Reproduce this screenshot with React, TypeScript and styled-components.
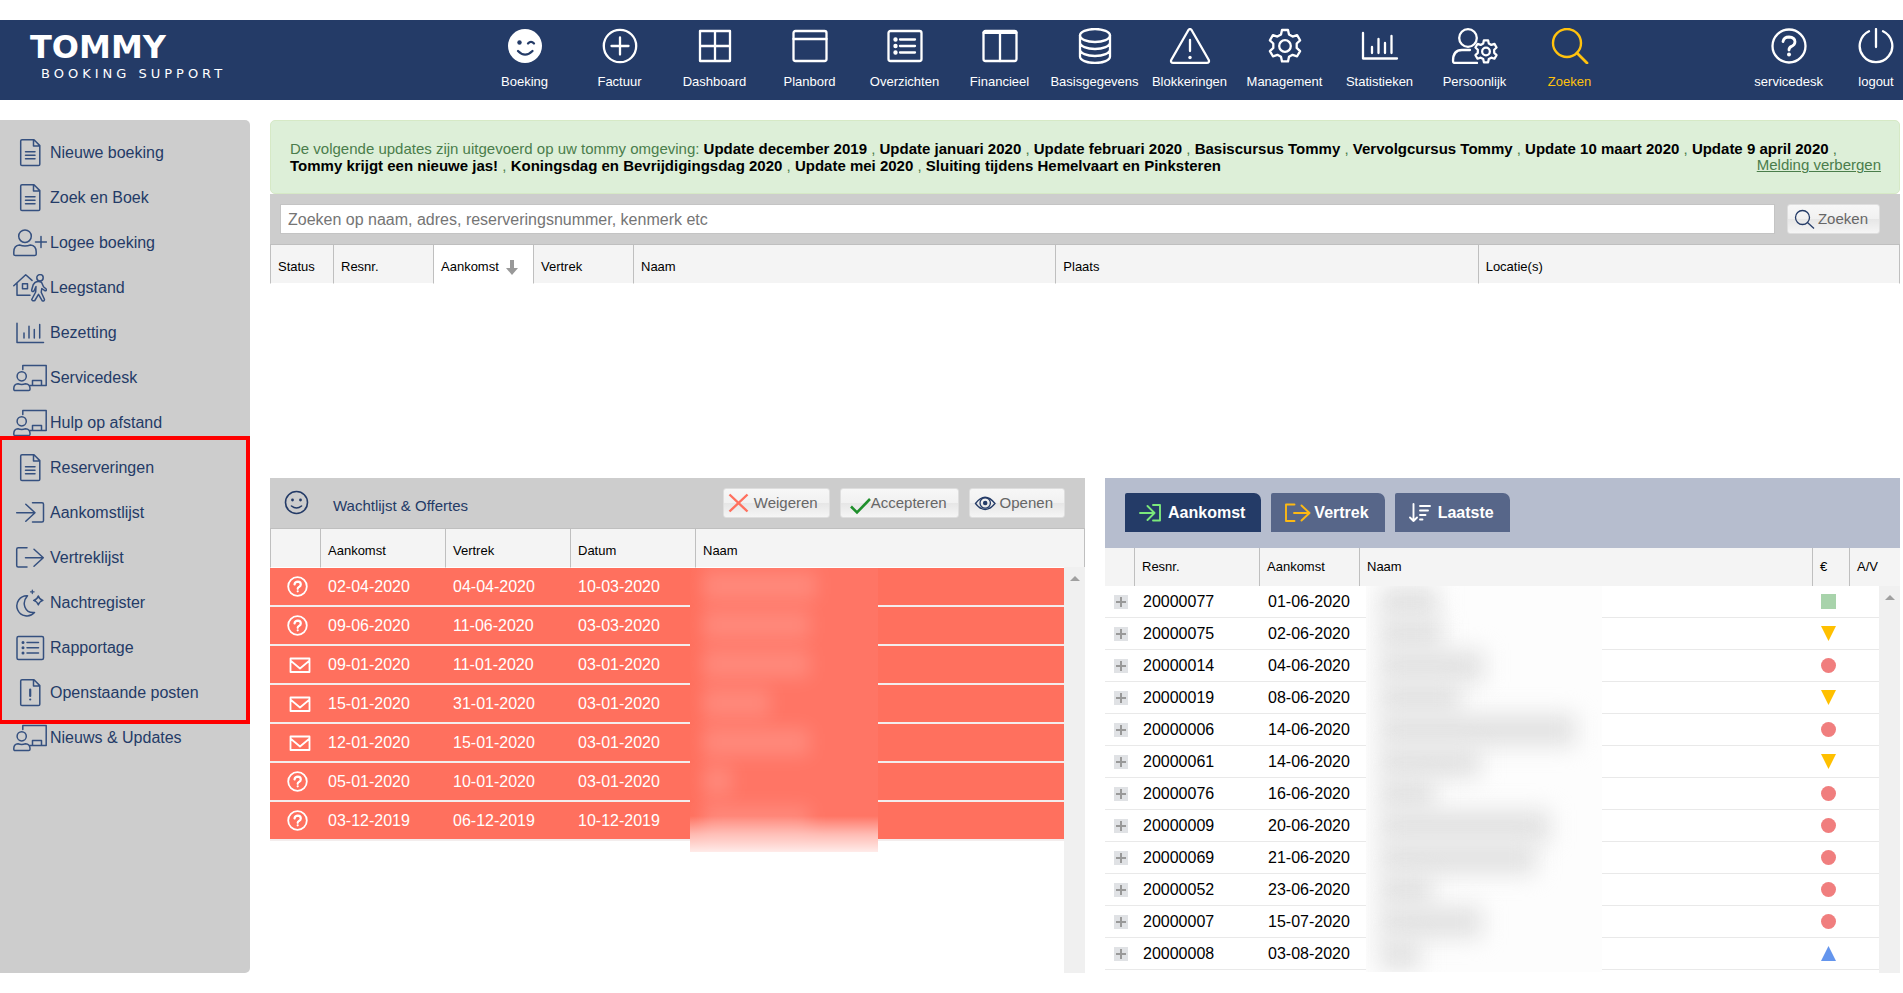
import React from "react";
import styled, { createGlobalStyle, css } from "styled-components";

const GlobalStyle = createGlobalStyle`
  *, *::before, *::after { box-sizing: border-box; }
  body {
    margin: 0;
    background: #fff;
    font-family: "Liberation Sans", Arial, sans-serif;
    color: #000;
  }
  a { color: inherit; text-decoration: none; }
  button, input { font-family: inherit; }
`;

const navy = "#243b67";
const grey = "#cdcdcd";
const line = "#bfbfbf";
const coral = "#ff705e";

/* ---------- Top bar ---------- */

const Page = styled.div`
  padding: 20px 0;
`;

const TopBar = styled.header`
  display: flex;
  height: 80px;
  background: ${navy};
  color: #fff;
`;

const Brand = styled.a`
  display: block;
  flex: 0 0 477px;
  padding: 8px 0 0 30px;
`;

const BrandName = styled.div`
  font: bold 32px/38px "DejaVu Sans", sans-serif;
`;

const BrandTag = styled.div`
  padding-left: 11px;
  font: 13px/16px "DejaVu Sans", sans-serif;
  letter-spacing: 4px;
`;

const MainNav = styled.nav`
  display: flex;
  flex: 1;
`;

const UserNav = styled.nav`
  display: flex;
  gap: 29px;
  padding-right: 3px;
`;

const NavLink = styled.a<{ $active?: boolean; $fixed?: boolean }>`
  display: flex;
  flex-direction: column;
  align-items: center;
  gap: 10px;
  padding-top: 8px;
  width: ${(p) => (p.$fixed ? "95px" : "auto")};
  font-size: 13px;
  line-height: 16px;
  white-space: nowrap;
  color: ${(p) => (p.$active ? "#ffc20e" : "#fff")};
`;

const NavSvg = styled.svg`
  display: block;
  width: 48px;
  height: 36px;
  fill: none;
  stroke: currentColor;
  stroke-width: 2.3;
  stroke-linecap: round;
  stroke-linejoin: round;
`;

/* ---------- Side menu ---------- */

const Content = styled.div`
  display: grid;
  grid-template-columns: 250px minmax(0, 1fr);
  gap: 20px;
  padding: 20px 3px 0 0;
`;

const Sidebar = styled.nav`
  padding: 10px 0;
  background: ${grey};
  border-radius: 0 5px 5px 0;
`;

const MenuGroup = styled.div`
  position: relative;
`;

const Highlight = styled.div`
  position: absolute;
  inset: -9px 0 -9px -2px;
  border: 4px solid #f00;
  pointer-events: none;
`;

const MenuLink = styled.a`
  display: flex;
  align-items: center;
  gap: 3px;
  height: 45px;
  padding-left: 13px;
  font-size: 16px;
  color: ${navy};
`;

const MenuSvg = styled.svg`
  display: block;
  width: 34px;
  height: 28px;
  fill: none;
  stroke: #35507f;
  stroke-width: 1.5;
  stroke-linecap: round;
  stroke-linejoin: round;
`;

/* ---------- Notice and search ---------- */

const Notice = styled.section`
  position: relative;
  min-height: 74px;
  padding: 19px;
  border: 1px solid #d6e9c6;
  border-radius: 5px;
  background: #ddefd8;
  color: #4a7d4b;
  font-size: 15px;
  line-height: 17px;
`;

const Update = styled.a`
  font-weight: bold;
  color: #000;
`;

const HideLink = styled.a`
  position: absolute;
  right: 18px;
  top: 35px;
  text-decoration: underline;
`;

const SearchForm = styled.form`
  display: flex;
  gap: 12px;
  height: 50px;
  padding: 10px 20px 10px 10px;
  background: ${grey};
`;

const SearchInput = styled.input`
  flex: 1;
  min-width: 0;
  height: 30px;
  padding: 2px 7px 0;
  border: 1px solid #c4c4c4;
  background: #fff;
  font-size: 16px;
  &::placeholder { color: #757575; opacity: 1; }
`;

const ToolButton = styled.button`
  display: flex;
  align-items: center;
  height: 30px;
  padding: 0 11px 1px 4px;
  border: 1px solid #dedede;
  border-radius: 3px;
  background: linear-gradient(#f7f7f7, #f1f1f1 50%, #e6e6e6 50%, #f5f5f5);
  font-size: 15px;
  color: #666;
`;

const ToolSvg = styled.svg`
  display: block;
  width: 26px;
  height: 24px;
  fill: none;
  stroke: ${navy};
  stroke-width: 1.3;
`;

/* ---------- Tables ---------- */

const Table = styled.table`
  width: 100%;
  table-layout: fixed;
  border-spacing: 0;
  border-collapse: separate;
`;

const Col = styled.col<{ $w?: number }>`
  width: ${(p) => (p.$w ? `${p.$w}px` : "auto")};
`;

const Th = styled.th<{ $sorted?: boolean; $low?: boolean; $open?: boolean }>`
  height: 38px;
  padding: ${(p) => (p.$low ? "6px 0 0 7px" : "0 0 0 7px")};
  border-left: 1px solid ${(p) => (p.$open ? "transparent" : line)};
  background: ${(p) => (p.$sorted ? "#fff" : "#f4f4f4")};
  font-size: 13px;
  font-weight: normal;
  line-height: 16px;
  text-align: left;
  white-space: nowrap;
  ${(p) =>
    p.$low &&
    css`
      height: 40px;
      border-top: 1px solid ${line};
      border-bottom: 1px solid #fff;
      &:last-child { border-right: 1px solid ${line}; }
    `}
`;

const SortSvg = styled.svg`
  width: 12px;
  height: 15px;
  margin-left: 7px;
  vertical-align: -4px;
  fill: #999;
`;

const Results = styled.section`
  min-height: 234px;
`;

const Panels = styled.div`
  display: grid;
  grid-template-columns: 815fr 795fr;
  gap: 20px;
`;

const Panel = styled.section`
  min-width: 0;
  display: flex;
  flex-direction: column;
`;

const PanelBody = styled.div`
  position: relative;
  flex: 1;
`;

const WaitHead = styled.div`
  display: flex;
  align-items: center;
  gap: 10px;
  height: 50px;
  padding: 0 20px 0 14px;
  background: ${grey};
`;

const SmileSvg = styled.svg`
  width: 25px;
  height: 25px;
  margin: 0 14px 2px 0;
  fill: none;
  stroke: ${navy};
  stroke-width: 1.6;
  stroke-linecap: round;
`;

const PanelTitle = styled.h2`
  flex: 1;
  margin: 0;
  padding-top: 4px;
  font-size: 15px;
  font-weight: normal;
  color: ${navy};
`;

const WaitCell = styled.td`
  height: 39px;
  padding: 0 0 0 8px;
  border-bottom: 2px solid #f3eded;
  background: ${coral};
  background-clip: padding-box;
  font-size: 16px;
  line-height: 18px;
  color: #fff;
`;

const RowSvg = styled.svg`
  display: block;
  width: 26px;
  height: 22px;
  margin-left: 9px;
  fill: none;
  stroke: #fff;
  stroke-width: 1.8;
  stroke-linecap: round;
  stroke-linejoin: round;
`;

const ScrollTrack = styled.div<{ $top: number }>`
  position: absolute;
  top: ${(p) => p.$top}px;
  right: 0;
  bottom: 0;
  width: 21px;
  background: #f0f0f0;
  &::before {
    content: "";
    display: block;
    width: 0;
    margin: 9px auto 0;
    border: 5px solid transparent;
    border-top: 0;
    border-bottom-color: #a0a0a0;
  }
`;

const TabHead = styled.div`
  display: flex;
  gap: 10px;
  height: 70px;
  padding: 15px 20px 16px;
  background: #b6bdce;
`;

const Tab = styled.button<{ $active?: boolean }>`
  display: flex;
  align-items: center;
  height: 39px;
  padding: 0 16px 0 14px;
  border: 0;
  border-radius: 2px 7px 0 0;
  background: ${(p) => (p.$active ? navy : "#576689")};
  font-size: 16px;
  font-weight: bold;
  color: #fff;
`;

const TabSvg = styled.svg<{ $color: string }>`
  display: block;
  width: 29px;
  height: 24px;
  fill: none;
  stroke: ${(p) => p.$color};
  stroke-width: 1.9;
  stroke-linecap: round;
  stroke-linejoin: round;
`;

const ArrivalCell = styled.td`
  height: 32px;
  padding: 0 0 0 9px;
  border-bottom: 1px solid #e9e9e9;
  font-size: 16px;
  line-height: 18px;
`;

const ExpandButton = styled.button`
  display: block;
  width: 14px;
  height: 14px;
  padding: 0;
  border: 0;
  background:
    linear-gradient(#999, #999) center / 10px 2px no-repeat,
    linear-gradient(#999, #999) center / 2px 10px no-repeat,
    #e0e2e5;
`;

const StatusSvg = styled.svg`
  display: block;
  width: 15px;
  height: 15px;
`;

const ArrivalBody = styled(PanelBody)`
  min-height: 425px;
`;

/* Redacted guest names */
const WaitMask = styled.div`
  position: absolute;
  left: 420px;
  top: 40px;
  width: 188px;
  height: 284px;
  padding-top: 4px;
  overflow: hidden;
  background: linear-gradient(90deg, ${coral}, #ff7565 20px);
  &::after {
    content: "";
    position: absolute;
    inset: auto 0 0 0;
    height: 36px;
    background: linear-gradient(rgba(255, 255, 255, 0), rgba(255, 255, 255, 0.5) 50%, rgba(255, 255, 255, 0.86));
  }
`;

const ArrivalMask = styled.div`
  position: absolute;
  left: 261px;
  top: 38px;
  width: 236px;
  bottom: 1px;
  overflow: hidden;
  background: #fdfdfd;
`;

const Smear = styled.div<{ $h: number; $tone: string; $soft: number; $gap: number }>`
  height: ${(p) => p.$h}px;
  margin: 0 0 ${(p) => p.$gap}px 14px;
  background: ${(p) => p.$tone};
  filter: blur(${(p) => p.$soft}px);
`;

/* ---------- Icon drawings ---------- */

const COG =
  "M-3 -16h6l1 4.6 3.6 2 4.5-1.5 3 5.2-3.4 3.2v4.4l3.4 3.2-3 5.2-4.5-1.5-3.6 2-1 4.6h-6l-1-4.6-3.6-2-4.5 1.5-3-5.2 3.4-3.2v-4.4l-3.4-3.2 3-5.2 4.5 1.5 3.6-2z";

const navIcons: Record<string, React.ReactNode> = {
  wink: (
    <>
      <circle cx="24" cy="18" r="17" fill="#fff" stroke="none" />
      <circle cx="18.5" cy="14.5" r="2.2" fill={navy} stroke="none" />
      <path d="M27 15.5q3-3.4 6 0M17 23q7 7.4 14.5 0" stroke={navy} />
    </>
  ),
  plus: (
    <>
      <circle cx="24" cy="18" r="16.2" />
      <path d="M24 9.5v17M15.5 18h17" />
    </>
  ),
  dashboard: <path d="M9 3h30v30H9zM24 3v30M9 18h30" />,
  board: (
    <>
      <rect x="7.5" y="3" width="33" height="30" rx="2" />
      <path d="M7.5 11h33" />
    </>
  ),
  list: (
    <>
      <rect x="7.5" y="3" width="33" height="30" rx="2" />
      <path d="M19 11.5h15M19 18h15M19 24.5h15" />
      <path d="M14.5 11.5h.01M14.5 18h.01M14.5 24.5h.01" strokeWidth="4.4" />
    </>
  ),
  columns: (
    <>
      <rect x="7.5" y="3" width="33" height="30" rx="2" />
      <path d="M24 5v28" />
      <path d="M8 4.5h32" strokeWidth="3" />
    </>
  ),
  database: (
    <>
      <ellipse cx="24" cy="7.5" rx="15" ry="6.5" />
      <path d="M9 7.5v21c0 3.6 6.7 6.5 15 6.5s15-2.9 15-6.5v-21M9 14.5c0 3.6 6.7 6.5 15 6.5s15-2.9 15-6.5M9 21.5c0 3.6 6.7 6.5 15 6.5s15-2.9 15-6.5" />
    </>
  ),
  warning: (
    <>
      <path d="M22.6 1.8q1.4-1.6 2.8 0L42.8 32q.8 2.8-2 2.8H7.2q-2.8 0-2-2.8z" />
      <path d="M24 12v11" />
      <path d="M24 29.5h.01" strokeWidth="3.4" />
    </>
  ),
  cog: (
    <g transform="translate(24 18)">
      <path d={COG} />
      <circle r="5.8" />
    </g>
  ),
  chart: <path d="M7 5v25.5h34M16 19v6M22.5 11v14M29 15v10M35.5 8v17" />,
  usercog: (
    <>
      <circle cx="17" cy="10" r="8.8" />
      <path d="M19 22H11c-6 0-9 4-9 11q0 2 2 2h22" />
      <g transform="translate(35 23.5) scale(.7)" strokeWidth="3.2">
        <path d={COG} />
        <circle r="5.5" />
      </g>
    </>
  ),
  search: (
    <>
      <circle cx="21" cy="15" r="14" strokeWidth="2.4" />
      <path d="M31 25l10 10" strokeWidth="2.8" />
    </>
  ),
  help: (
    <>
      <circle cx="24" cy="18" r="16.5" />
      <path d="M18 13.5q.8-4.5 6-4.5 5.8.2 6 4.8 0 3-3.5 4.6-2.5 1-2.5 3.6" strokeWidth="2.8" />
      <path d="M24 26.5h.01" strokeWidth="4" />
    </>
  ),
  power: <path d="M24 1v18M17 3.2a16.3 16.3 0 1 0 14 0" />,
};

const NavIcon = ({ name }: { name: string }) => (
  <NavSvg viewBox="0 0 48 36" aria-hidden="true">
    {navIcons[name]}
  </NavSvg>
);

const sheet = <path d="M9 .8h12l5.8 5.8v18.6q0 1.3-1.3 1.3H9q-1.3 0-1.3-1.3V2.1Q7.7.8 9 .8zM20.5 1v6h6" />;
const enterPath = "M3.7 13.7H22M12.8 5.3l9.2 8.4-9.2 8.6M19.5 3.7h9.5q1.5 0 1.5 1.5v16.4q0 1.5-1.5 1.5h-9.5";
const exitPath = "M14 3.7H5.2q-1.5 0-1.5 1.5v16.4q0 1.5 1.5 1.5H14M12.5 13.7h17.8M21 5.3l9.3 8.4-9.3 8.6";

const menuIcons: Record<string, React.ReactNode> = {
  sheet: (
    <>
      {sheet}
      <path d="M12.5 12.8h9.5M12.5 16.3h9.5M12.5 19.8h9.5" />
    </>
  ),
  guest: (
    <>
      <circle cx="12" cy="7.2" r="6.3" />
      <path d="M6.5 16q5.5 2 11 0 5.7.5 5.7 7v2q0 1.6-1.6 1.6H2.4Q.8 26.600.8 25v-2q0-6.5 5.7-7zM22.5 13h11M28 7.5v11" />
    </>
  ),
  vacant: (
    <>
      <path d="M.8 11.8L12.7.8l6.3 5.6M4 9.5v11.8h13M9.5 9.8h5v5h-5z" />
      <circle cx="27" cy="3.8" r="3.2" />
      <path d="M22 8.5q3-1.8 6.5-.2l2 4.4 2.7 2.3q.6 2-1.4 1.7l-3-2.2-.6 3.8 3.3 7.2q-.2 2-2.2 1.4l-3.8-6.6-3.7 6.2q-2.4 1-3.1-1l4-7.5.3-5.5-2 4.5q-2.2 1.3-2.4-.8l1.6-5.4z" />
    </>
  ),
  chart: <path d="M4 4.3v19.2h26.5M11 14v5M16 7.3v11.7M21.3 10.5V19M26.7 5.5V19" />,
  desk: (
    <>
      <path d="M9.8 5.5V1.5h23.4v20H17M19.5 21.5v-5h9v5" />
      <circle cx="8.7" cy="12.3" r="4.6" />
      <path d="M5 19.8q3.7 1.3 7.5 0 4.3.2 4.5 4.5v1q0 1.3-1.3 1.3H2.1Q.8 26.600.8 25.3v-1Q1 20 5 19.8z" />
    </>
  ),
  enter: <path d={enterPath} />,
  exit: <path d={exitPath} />,
  night: (
    <>
      <path d="M14.5 6.7A10.1 10.1 0 1 0 21.5 23.5C12 24.5 8 14 14.5 6.7zM25.3 7q1 3.3 4.6 4.4-3.6 1.2-4.6 4.5-1-3.3-4.6-4.5 3.6-1.1 4.6-4.4z" />
      <path d="M19.3 1v3.6M17.5 2.8h3.6" strokeWidth="1.2" />
    </>
  ),
  list: (
    <>
      <rect x="4" y="2.5" width="26.5" height="23" rx="1.5" />
      <path d="M14 8.5h11.5M14 13.8h11.5M14 19h11.5" />
      <path d="M10 8.5h.01M10 13.8h.01M10 19h.01" strokeWidth="3" />
    </>
  ),
  due: (
    <>
      {sheet}
      <path d="M17.2 10.5v6.5M17.2 20.5h.01" strokeWidth="2.2" />
    </>
  ),
};

const mainNav = [
  ["wink", "Boeking"],
  ["plus", "Factuur"],
  ["dashboard", "Dashboard"],
  ["board", "Planbord"],
  ["list", "Overzichten"],
  ["columns", "Financieel"],
  ["database", "Basisgegevens"],
  ["warning", "Blokkeringen"],
  ["cog", "Management"],
  ["chart", "Statistieken"],
  ["usercog", "Persoonlijk"],
  ["search", "Zoeken"],
];

const menuTop = [
  ["sheet", "Nieuwe boeking"],
  ["sheet", "Zoek en Boek"],
  ["guest", "Logee boeking"],
  ["vacant", "Leegstand"],
  ["chart", "Bezetting"],
  ["desk", "Servicedesk"],
  ["desk", "Hulp op afstand"],
];

const menuLists = [
  ["sheet", "Reserveringen"],
  ["enter", "Aankomstlijst"],
  ["exit", "Vertreklijst"],
  ["night", "Nachtregister"],
  ["list", "Rapportage"],
  ["due", "Openstaande posten"],
];

const updates = [
  "Update december 2019",
  "Update januari 2020",
  "Update februari 2020",
  "Basiscursus Tommy",
  "Vervolgcursus Tommy",
  "Update 10 maart 2020",
  "Update 9 april 2020",
  "Tommy krijgt een nieuwe jas!",
  "Koningsdag en Bevrijdigingsdag 2020",
  "Update mei 2020",
  "Sluiting tijdens Hemelvaart en Pinksteren",
];

const waiting = [
  ["vraag", "02-04-2020", "04-04-2020", "10-03-2020"],
  ["vraag", "09-06-2020", "11-06-2020", "03-03-2020"],
  ["mail", "09-01-2020", "11-01-2020", "03-01-2020"],
  ["mail", "15-01-2020", "31-01-2020", "03-01-2020"],
  ["mail", "12-01-2020", "15-01-2020", "03-01-2020"],
  ["vraag", "05-01-2020", "10-01-2020", "03-01-2020"],
  ["vraag", "03-12-2019", "06-12-2019", "10-12-2019"],
];

const arrivals = [
  ["20000077", "01-06-2020", "square"],
  ["20000075", "02-06-2020", "down"],
  ["20000014", "04-06-2020", "circle"],
  ["20000019", "08-06-2020", "down"],
  ["20000006", "14-06-2020", "circle"],
  ["20000061", "14-06-2020", "down"],
  ["20000076", "16-06-2020", "circle"],
  ["20000009", "20-06-2020", "circle"],
  ["20000069", "21-06-2020", "circle"],
  ["20000052", "23-06-2020", "circle"],
  ["20000007", "15-07-2020", "circle"],
  ["20000008", "03-08-2020", "up"],
];

const waitSmears = [112, 106, 106, 66, 106, 28, 106];
const arrivalSmears = [58, 62, 104, 80, 196, 100, 54, 170, 156, 52, 102, 40];

const Menu = ({ items }: { items: string[][] }) => (
  <>
    {items.map(([icon, label]) => (
      <MenuLink href="#" key={label}>
        <MenuSvg viewBox="0 0 34 28" aria-hidden="true">
          {menuIcons[icon]}
        </MenuSvg>
        {label}
      </MenuLink>
    ))}
  </>
);

const Status = ({ kind }: { kind: string }) => (
  <StatusSvg viewBox="0 0 15 15" role="img" aria-label={kind}>
    {kind === "square" && <rect width="15" height="15" fill="#a8d3ab" />}
    {kind === "circle" && <circle cx="7.5" cy="7.5" r="7.5" fill="#f07e7e" />}
    {kind === "down" && <path d="M0 0h15L7.5 15z" fill="#ffc000" />}
    {kind === "up" && <path d="M0 15h15L7.5 0z" fill="#6495ed" />}
  </StatusSvg>
);

export default function App() {
  return (
    <Page>
      <GlobalStyle />
      <TopBar>
        <Brand href="#">
          <BrandName>TOMMY</BrandName>
          <BrandTag>BOOKING SUPPORT</BrandTag>
        </Brand>
        <MainNav>
          {mainNav.map(([icon, label]) => (
            <NavLink href="#" key={label} $fixed $active={icon === "search"}>
              <NavIcon name={icon} />
              {label}
            </NavLink>
          ))}
        </MainNav>
        <UserNav>
          <NavLink href="#">
            <NavIcon name="help" />
            servicedesk
          </NavLink>
          <NavLink href="#">
            <NavIcon name="power" />
            logout
          </NavLink>
        </UserNav>
      </TopBar>

      <Content>
        <Sidebar>
          <Menu items={menuTop} />
          <MenuGroup>
            <Menu items={menuLists} />
            <Highlight />
          </MenuGroup>
          <Menu items={[["desk", "Nieuws & Updates"]]} />
        </Sidebar>

        <main>
          <Notice>
            De volgende updates zijn uitgevoerd op uw tommy omgeving:{" "}
            {updates.map((u, i) => (
              <React.Fragment key={u}>
                {i > 0 && " , "}
                <Update href="#">{u}</Update>
              </React.Fragment>
            ))}
            <HideLink href="#">Melding verbergen</HideLink>
          </Notice>

          <SearchForm>
            <SearchInput
              type="text"
              aria-label="Zoeken"
              placeholder="Zoeken op naam, adres, reserveringsnummer, kenmerk etc"
            />
            <ToolButton type="button">
              <ToolSvg viewBox="0 0 26 24">
                <circle cx="10.5" cy="10.5" r="7" />
                <path d="M15.5 15.5l6.5 6" />
              </ToolSvg>
              Zoeken
            </ToolButton>
          </SearchForm>

          <Results>
            <Table>
              <colgroup>
                <Col $w={63} />
                <Col $w={100} />
                <Col $w={100} />
                <Col $w={100} />
                <Col />
                <Col />
                <Col />
              </colgroup>
              <thead>
                <tr>
                  <Th $low>Status</Th>
                  <Th $low>Resnr.</Th>
                  <Th $low $sorted aria-sort="descending">
                    Aankomst
                    <SortSvg viewBox="0 0 12 15">
                      <path d="M4 0h4v8h4l-6 7-6-7h4z" />
                    </SortSvg>
                  </Th>
                  <Th $low>Vertrek</Th>
                  <Th $low>Naam</Th>
                  <Th $low>Plaats</Th>
                  <Th $low>Locatie(s)</Th>
                </tr>
              </thead>
            </Table>
          </Results>

          <Panels>
            <Panel>
              <WaitHead>
                <SmileSvg viewBox="0 0 25 25" aria-hidden="true">
                  <circle cx="12.5" cy="12.5" r="11" />
                  <path d="M7.5 16q5 4 10 0" />
                  <path d="M8.5 10h.01M16.5 10h.01" strokeWidth="2.8" />
                </SmileSvg>
                <PanelTitle>Wachtlijst &amp; Offertes</PanelTitle>
                <ToolButton type="button">
                  <ToolSvg viewBox="0 0 26 24">
                    <path d="M1.5 3.5l18 17M19.5 3.5l-18 17" stroke={coral} strokeWidth="2.4" />
                  </ToolSvg>
                  Weigeren
                </ToolButton>
                <ToolButton type="button">
                  <ToolSvg viewBox="0 0 26 24">
                    <path d="M6 15.5l6 6L25 8" stroke="#1f8f2c" strokeWidth="2.6" />
                  </ToolSvg>
                  Accepteren
                </ToolButton>
                <ToolButton type="button">
                  <ToolSvg viewBox="0 0 26 24">
                    <path d="M1.5 12.5q9.5-12.5 19.5 0-10 12-19.5 0z" />
                    <circle cx="11.2" cy="12" r="5.2" />
                    <circle cx="11.2" cy="12" r="1.6" fill={navy} />
                  </ToolSvg>
                  Openen
                </ToolButton>
              </WaitHead>
              <PanelBody>
                <Table>
                  <colgroup>
                    <Col $w={50} />
                    <Col $w={125} />
                    <Col $w={125} />
                    <Col $w={125} />
                    <Col />
                  </colgroup>
                  <thead>
                    <tr>
                      <Th $low aria-label="Soort" />
                      <Th $low>Aankomst</Th>
                      <Th $low>Vertrek</Th>
                      <Th $low>Datum</Th>
                      <Th $low>Naam</Th>
                    </tr>
                  </thead>
                  <tbody>
                    {waiting.map(([kind, ...dates], i) => (
                      <tr key={i}>
                        <WaitCell>
                          <RowSvg viewBox="0 0 26 22" role="img" aria-label={kind}>
                            {kind === "mail" ? (
                              <path d="M3.5 4.5h19v13.5h-19zM4 7l9 7.5L22 7" />
                            ) : (
                              <>
                                <circle cx="10.5" cy="10.5" r="9.3" />
                                <path d="M7.5 8.5q.5-2.8 3.3-2.8 3 .2 3 2.8 0 1.5-1.8 2.4-1.3.7-1.3 1.9M10.7 15.3h.01" strokeWidth="2.2" />
                              </>
                            )}
                          </RowSvg>
                        </WaitCell>
                        {dates.map((d, j) => (
                          <WaitCell key={j}>{d}</WaitCell>
                        ))}
                        <WaitCell />
                      </tr>
                    ))}
                  </tbody>
                </Table>
                <WaitMask>
                  {waitSmears.map((w, i) => (
                    <Smear key={i} $h={28} $gap={11} $tone="rgba(255,255,255,.15)" $soft={9} style={{ width: w }} />
                  ))}
                </WaitMask>
                <ScrollTrack $top={39} />
              </PanelBody>
            </Panel>

            <Panel>
              <TabHead>
                <Tab type="button" $active>
                  <TabSvg viewBox="0 0 29 24" $color="#7be87b">
                    <path d="M1 12h14.5M8.5 5l7 7-7 7M14 4h7v15.5h-7" />
                  </TabSvg>
                  Aankomst
                </Tab>
                <Tab type="button">
                  <TabSvg viewBox="0 0 29 24" $color="#fdb913">
                    <path d="M9.5 3.5H1v16.5h8.5M9 12h15M16.5 4.5l8 7.5-8 7.5" />
                  </TabSvg>
                  Vertrek
                </Tab>
                <Tab type="button">
                  <TabSvg viewBox="0 0 29 24" $color="#fff">
                    <path d="M4.5 3v17M1 16.5L4.5 20 8 16.5M11 5h10M11 9.5h8M11 14h5.5M11 18.5h2.5" />
                  </TabSvg>
                  Laatste
                </Tab>
              </TabHead>
              <ArrivalBody>
                <Table>
                  <colgroup>
                    <Col $w={29} />
                    <Col $w={125} />
                    <Col $w={100} />
                    <Col />
                    <Col $w={37} />
                    <Col $w={51} />
                  </colgroup>
                  <thead>
                    <tr>
                      <Th $open aria-label="Details" />
                      <Th>Resnr.</Th>
                      <Th>Aankomst</Th>
                      <Th>Naam</Th>
                      <Th>€</Th>
                      <Th>A/V</Th>
                    </tr>
                  </thead>
                  <tbody>
                    {arrivals.map(([nr, date, status]) => (
                      <tr key={nr}>
                        <ArrivalCell>
                          <ExpandButton type="button" aria-label={`Toon ${nr}`} />
                        </ArrivalCell>
                        <ArrivalCell>{nr}</ArrivalCell>
                        <ArrivalCell>{date}</ArrivalCell>
                        <ArrivalCell />
                        <ArrivalCell>
                          <Status kind={status} />
                        </ArrivalCell>
                        <ArrivalCell />
                      </tr>
                    ))}
                  </tbody>
                </Table>
                <ArrivalMask>
                  {arrivalSmears.map((w, i) => (
                    <Smear key={i} $h={32} $gap={0} $tone="#e2e2e2" $soft={11} style={{ width: w }} />
                  ))}
                </ArrivalMask>
                <ScrollTrack $top={38} />
              </ArrivalBody>
            </Panel>
          </Panels>
        </main>
      </Content>
    </Page>
  );
}
